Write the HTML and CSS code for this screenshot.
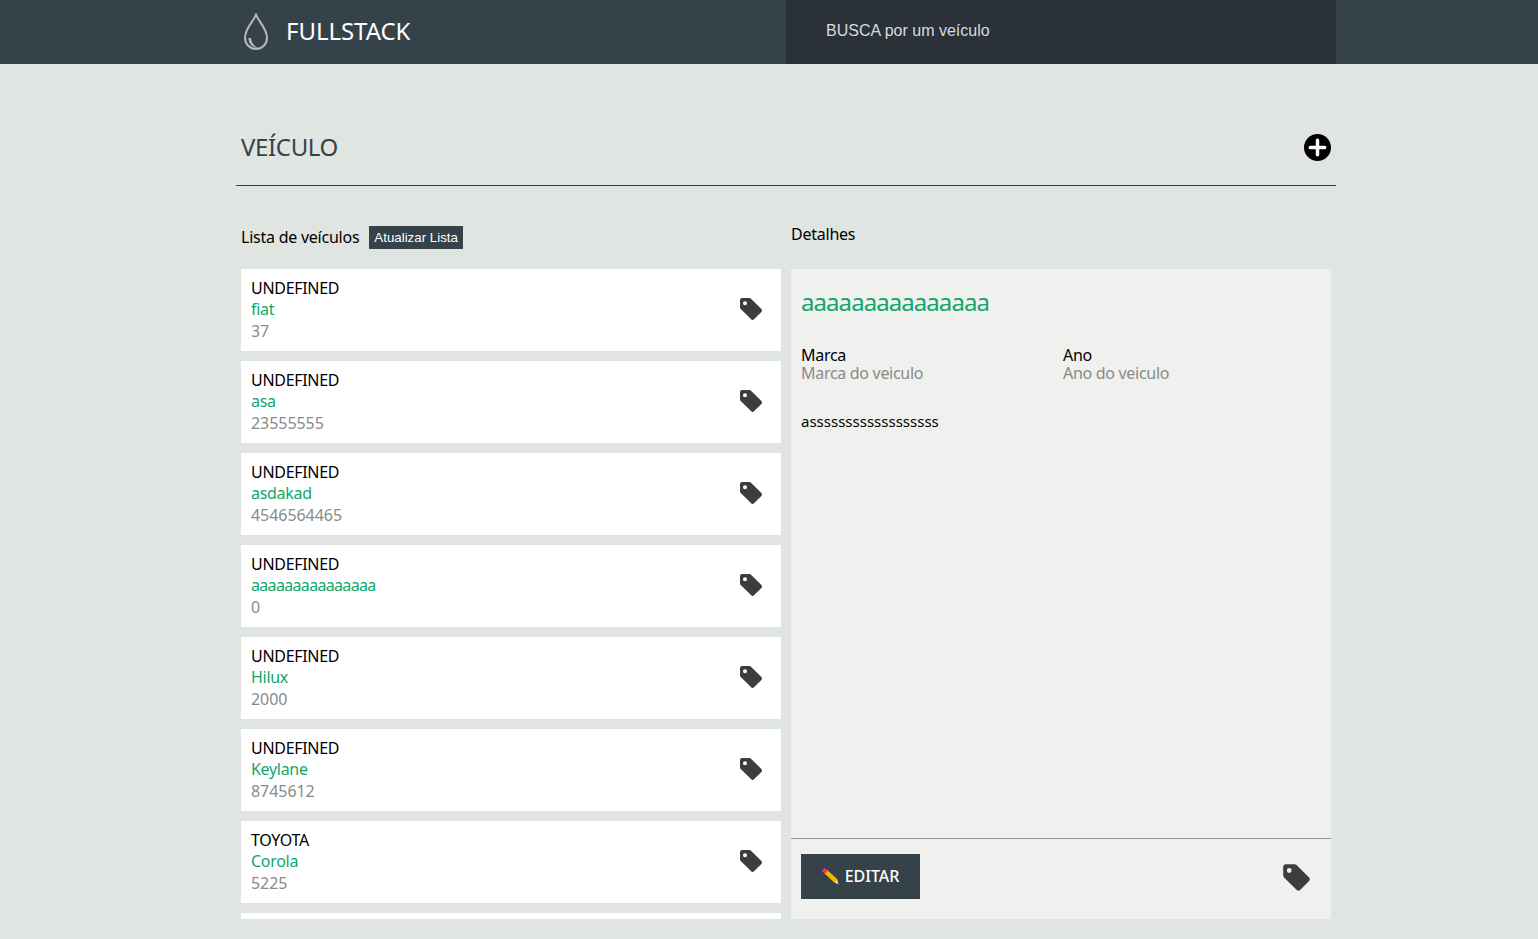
FILE: index.html
```html
<!DOCTYPE html>
<html lang="pt-BR">
<head>
  <meta charset="UTF-8">
  <title>Fullstack - Veículos</title>
  <link rel="stylesheet" href="styles.css">
</head>
<body>
  <svg class="sprites" width="0" height="0">
    <symbol id="tag" viewBox="0 0 24 24">
      <path d="M1 3.2C1 1.9 1.9 1 3.2 1h7.1c.7 0 1.2.2 1.7.7l10.4 10.4c.8.8.8 2 0 2.8l-7.4 7.4c-.8.8-2 .8-2.8 0L1.7 12c-.5-.5-.7-1-.7-1.7zM6 4.2a2 2 0 1 0 0 4 2 2 0 0 0 0-4z" fill-rule="evenodd"/>
    </symbol>
    <symbol id="pencil" viewBox="0 0 18 18">
      <path d="M5 1.6 16 11.6l-3.4 3.6L1.9 5z" fill="#f7b500"/>
      <path d="M3.2 0.6 6 3.2 2.9 6.4.4 3.8c-.5-.5-.5-1.200 0-1.700L1.500.7c.5-.5 1.200-.6 1.700-.1z" fill="#e8384f"/>
      <path d="M12.600 15.200 16 11.600l1.500 5.700z" fill="#f9dc8c"/>
    </symbol>
  </svg>

  <header class="topbar">
    <div class="topbar-inner">
      <div class="brand">
        <svg class="drop" viewBox="0 0 26 38" width="26" height="38">
          <path d="M13 1.500C11 8 2 15 2 25a11 11 0 0 0 22 0C24 15 15 8 13 1.500z" fill="none" stroke="#b4b8ba" stroke-width="2"/>
          <path d="M5.500 25c0 5 3 9 9 10-3.500-2-6-5.500-6.500-10z" fill="#b4b8ba"/>
        </svg>
        <span class="brand-name">FULLSTACK</span>
      </div>
      <div class="search">BUSCA por um veículo</div>
    </div>
  </header>

  <main class="container">
    <div class="title-row">
      <h1>VEÍCULO</h1>
      <svg class="add" viewBox="0 0 28 28" width="27" height="27">
        <circle cx="14" cy="14" r="14" fill="#000"/>
        <path d="M14 6.500v15M6.500 14h15" stroke="#fff" stroke-width="3.600" stroke-linecap="round"/>
      </svg>
    </div>

    <div class="columns">
      <section class="col">
        <div class="col-head">
          <span>Lista de veículos</span>
          <button class="refresh">Atualizar Lista</button>
        </div>
        <div class="list">
          <div class="card">
            <div class="card-text"><strong>UNDEFINED</strong><em>fiat</em><small>37</small></div>
            <svg class="tag"><use href="#tag"/></svg>
          </div>
          <div class="card">
            <div class="card-text"><strong>UNDEFINED</strong><em>asa</em><small>23555555</small></div>
            <svg class="tag"><use href="#tag"/></svg>
          </div>
          <div class="card">
            <div class="card-text"><strong>UNDEFINED</strong><em>asdakad</em><small>4546564465</small></div>
            <svg class="tag"><use href="#tag"/></svg>
          </div>
          <div class="card">
            <div class="card-text"><strong>UNDEFINED</strong><em class="tight">aaaaaaaaaaaaaaa</em><small>0</small></div>
            <svg class="tag"><use href="#tag"/></svg>
          </div>
          <div class="card">
            <div class="card-text"><strong>UNDEFINED</strong><em>Hilux</em><small>2000</small></div>
            <svg class="tag"><use href="#tag"/></svg>
          </div>
          <div class="card">
            <div class="card-text"><strong>UNDEFINED</strong><em>Keylane</em><small>8745612</small></div>
            <svg class="tag"><use href="#tag"/></svg>
          </div>
          <div class="card">
            <div class="card-text"><strong>TOYOTA</strong><em>Corola</em><small>5225</small></div>
            <svg class="tag"><use href="#tag"/></svg>
          </div>
          <div class="card"></div>
        </div>
      </section>

      <section class="col">
        <div class="col-head detail-head">Detalhes</div>
        <div class="detail">
          <div class="detail-body">
            <h2>aaaaaaaaaaaaaaa</h2>
            <div class="specs">
              <div><b>Marca</b><span>Marca do veiculo</span></div>
              <div><b>Ano</b><span>Ano do veiculo</span></div>
            </div>
            <p>assssssssssssssssss</p>
          </div>
          <div class="detail-foot">
            <button class="edit"><svg class="pencil"><use href="#pencil"/></svg>EDITAR</button>
            <svg class="tag tag-big"><use href="#tag"/></svg>
          </div>
        </div>
      </section>
    </div>
  </main>
</body>
</html>
```

FILE: styles.css
```css
* {
  box-sizing: border-box;
}

html, body {
  height: 100%;
}

body {
  margin: 0;
  overflow: hidden;
  background: #e0e5e2;
  color: #000;
  font-family: "Noto Sans", "Open Sans", sans-serif;
  font-size: 16px;
}

.sprites {
  position: absolute;
}

.topbar {
  height: 64px;
  background: #36424a;
}

.topbar-inner {
  display: flex;
  width: 1100px;
  height: 64px;
  margin-left: 236px;
}

.brand {
  display: flex;
  align-items: center;
  width: 550px;
  padding-left: 7px;
}

.drop {
  margin-right: 17px;
}

.brand-name {
  margin-bottom: 4px;
  color: #fff;
  font-size: 24px;
  letter-spacing: -0.05px;
}

.search {
  flex: 1;
  padding: 22px 40px 0;
  background: #2a3138;
  color: #d8dcde;
  font-family: "Liberation Sans", sans-serif;
  font-size: 16px;
}

.container {
  width: 1100px;
  margin-left: 236px;
}

.title-row {
  display: flex;
  align-items: center;
  justify-content: space-between;
  height: 122px;
  padding: 46px 5px 0;
  border-bottom: 1px solid #36424a;
}

h1 {
  margin: 0 0 3px;
  color: #36424a;
  font-size: 24px;
  font-weight: 400;
  letter-spacing: -0.35px;
}

.columns {
  display: flex;
  gap: 10px;
  padding: 0 5px;
}

.col {
  width: 540px;
}

.col-head {
  display: flex;
  align-items: center;
  gap: 10px;
  height: 83px;
  padding-top: 20px;
  font-size: 16px;
  letter-spacing: -0.24px;
}

.col-head span {
  margin-bottom: 2px;
}

.detail-head {
  align-items: flex-start;
  padding-top: 37px;
}

.refresh {
  height: 23px;
  padding: 0 5px;
  border: none;
  background: #36424a;
  color: #fff;
  font-family: "Liberation Sans", sans-serif;
  font-size: 13.300px;
}

.list {
  height: 650px;
  overflow: hidden;
}

.card {
  display: flex;
  align-items: center;
  justify-content: space-between;
  height: 82px;
  margin-bottom: 10px;
  padding: 0 18px 1px 10px;
  background: #fff;
}

.card-text strong,
.card-text em,
.card-text small {
  display: block;
  height: 22px;
  font-size: 16px;
  font-style: normal;
  font-weight: 400;
  line-height: 22px;
  letter-spacing: -0.3px;
}

.card-text strong {
  height: 21px;
}

.card-text em {
  color: #0fa76c;
}

.card-text em.tight {
  letter-spacing: -0.67px;
}

.card-text small {
  color: #8a8a8a;
  letter-spacing: -0.05px;
}

.tag {
  width: 24px;
  height: 24px;
  margin-bottom: 1px;
  fill: #3d3d3d;
}

.detail {
  display: flex;
  flex-direction: column;
  height: 650px;
  background: #f0f0ee;
}

.detail-body {
  flex: 1;
  padding: 18px 10px 0;
}

h2 {
  margin: 0;
  color: #0fa76c;
  font-size: 24px;
  font-weight: 400;
  line-height: 30px;
  letter-spacing: -0.93px;
}

.specs {
  display: grid;
  grid-template-columns: 262px 1fr;
  margin-top: 29px;
  letter-spacing: -0.3px;
}

.specs b,
.specs span {
  display: block;
  font-weight: 400;
  line-height: 18px;
}

.specs span {
  color: #8a8a8a;
}

p {
  margin: 29px 0 0;
  font-size: 15px;
}

.detail-foot {
  display: flex;
  align-items: center;
  justify-content: space-between;
  height: 81px;
  padding: 0 20px 6px 10px;
  border-top: 1px solid #8f9896;
}

.edit {
  display: flex;
  align-items: center;
  justify-content: center;
  width: 119px;
  height: 45px;
  border: none;
  background: #36424a;
  color: #fff;
  font-family: inherit;
  font-size: 16px;
  font-weight: 500;
}

.pencil {
  width: 17px;
  height: 17px;
  margin-right: 6px;
}

.tag-big {
  width: 29px;
  height: 29px;
  margin: 3px 0 0;
}
```
